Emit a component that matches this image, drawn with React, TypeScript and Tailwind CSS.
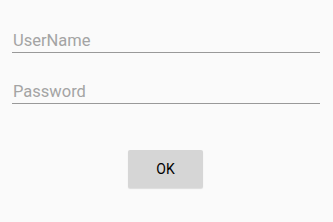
export default function App() {
  return (
    <div className="min-h-[222px] w-full bg-[#fafafa] pt-[30px] font-['Roboto',sans-serif]">
      <div className="flex flex-col gap-[28px] pl-[12px] pr-[13px]">
        <input
          type="text"
          placeholder="UserName"
          className="h-[23px] w-full border-b border-[#999] bg-transparent px-[1px] text-[16.5px] text-[#222] outline-none placeholder:text-[#a4a4a4]"
        />
        <input
          type="password"
          placeholder="Password"
          className="h-[23px] w-full border-b border-[#999] bg-transparent px-[1px] text-[16.5px] text-[#222] outline-none placeholder:text-[#a4a4a4]"
        />
      </div>
      <div className="mt-[46px] flex justify-center pr-[2px]">
        <button className="h-[38px] w-[75px] rounded-[2px] bg-[#d6d6d6] text-[14px] text-black shadow-[0_1px_1px_rgba(0,0,0,0.12)]">
          OK
        </button>
      </div>
    </div>
  );
}
